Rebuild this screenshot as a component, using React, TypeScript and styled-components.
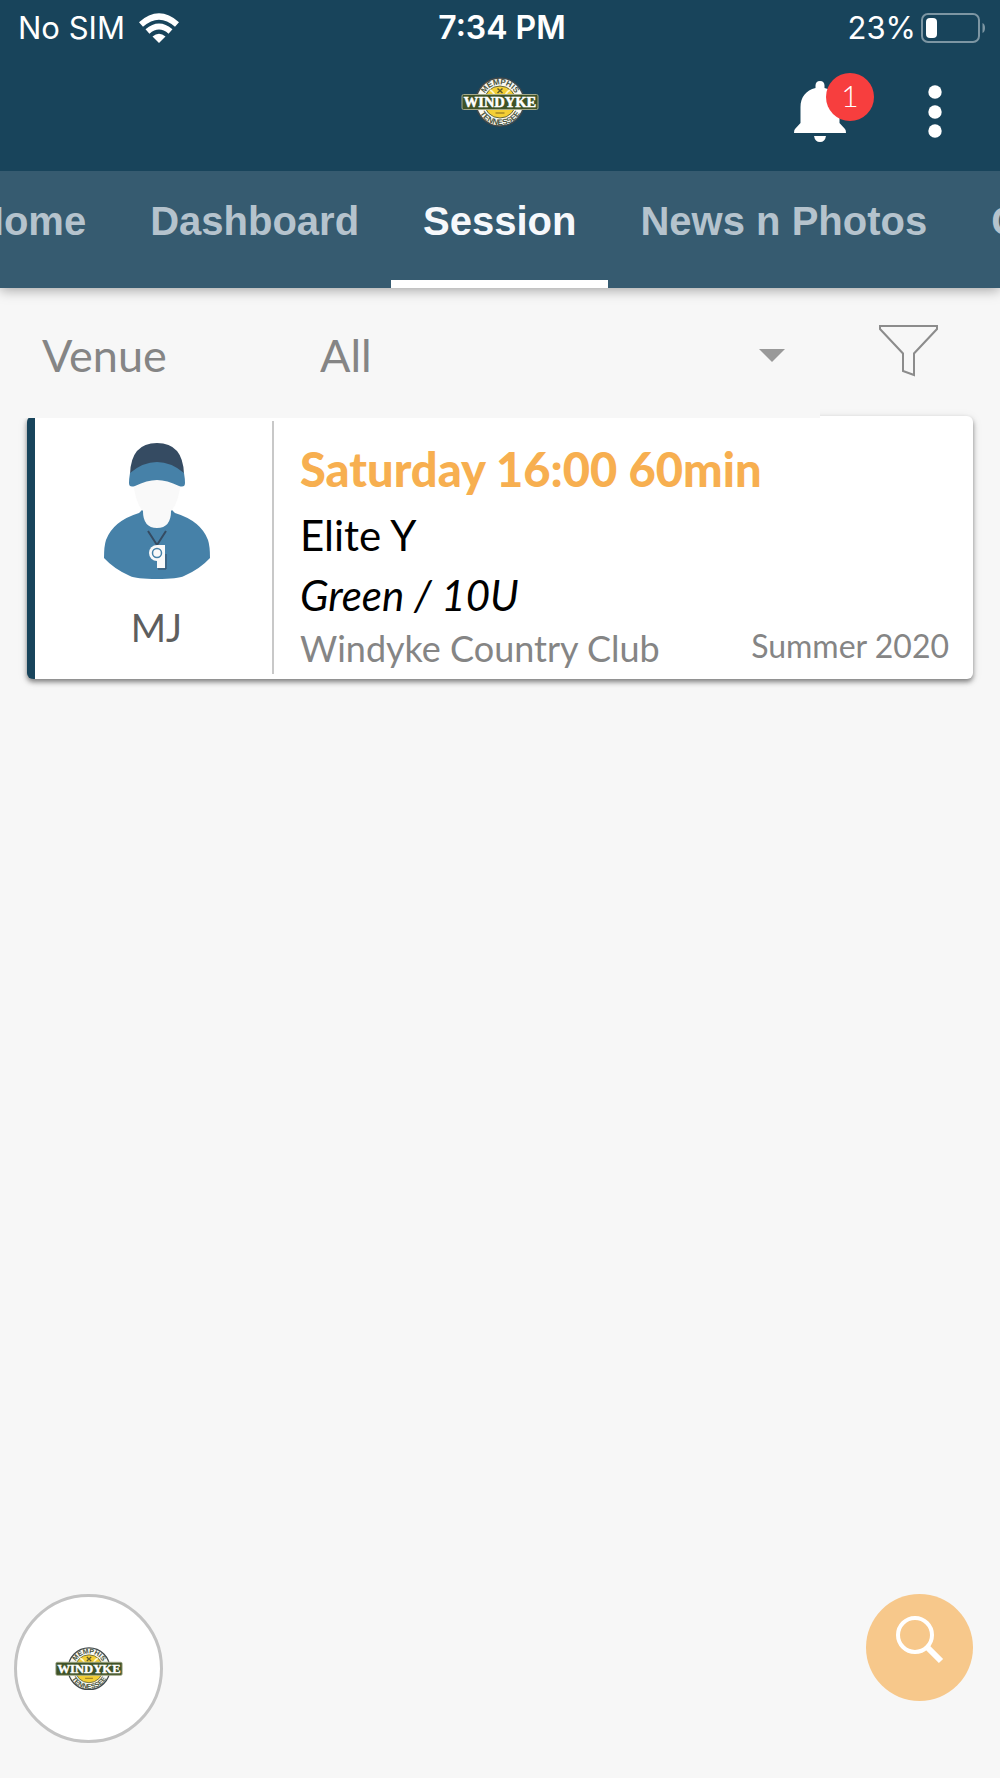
import React, { useId, useLayoutEffect, useRef, useState } from "react";
import styled, { createGlobalStyle } from "styled-components";

const navy = "#18445b";
const sans = `Lato, "Open Sans", sans-serif`;

const GlobalStyle = createGlobalStyle`
  *, *::before, *::after { box-sizing: border-box; }
  body { margin: 0; background: #f7f7f7; font-family: ${sans}; }
  button, select { font: inherit; color: inherit; background: none; border: 0; padding: 0; margin: 0; }
  svg { display: block; }
`;

const Page = styled.div`
  min-height: 100vh;
  display: flex;
  flex-direction: column;
`;

const Top = styled.header`
  position: relative;
  z-index: 3;
  background: ${navy};
  color: #fff;
`;

const StatusBar = styled.div`
  display: grid;
  grid-template-columns: 1fr auto 1fr;
  align-items: center;
  height: 56px;
  padding: 0 14px 0 18px;
  font-family: Inter, sans-serif;
  font-size: 31px;
  line-height: 36px;
`;

const StatusGroup = styled.div<{ $end?: boolean }>`
  display: flex;
  align-items: center;
  justify-content: ${(p) => (p.$end ? "flex-end" : "flex-start")};
  gap: ${(p) => (p.$end ? 5 : 14)}px;
`;

const Clock = styled.time`
  font-size: 32px;
  font-weight: 600;
`;

const AppBar = styled.div`
  display: grid;
  grid-template-columns: 1fr auto 1fr;
  align-items: center;
  height: 115px;
  padding: 0 58px 4px;
`;

const Brand = styled.div`
  grid-column: 2;
  padding-bottom: 20px;
`;

const Actions = styled.div`
  display: flex;
  justify-content: flex-end;
  align-items: center;
  gap: 82px;
`;

const IconButton = styled.button`
  position: relative;
  display: flex;
  align-items: center;
  justify-content: center;
  cursor: pointer;
`;

const Badge = styled.span`
  position: absolute;
  left: 32px;
  top: -8px;
  width: 48px;
  height: 48px;
  border-radius: 50%;
  background: #f73e3e;
  font-size: 30px;
  font-weight: 300;
  line-height: 44px;
  text-align: center;
`;

const Tabs = styled.nav`
  position: relative;
  z-index: 2;
  display: flex;
  overflow-x: auto;
  scrollbar-width: none;
  background: #365b70;
  box-shadow: 0 2px 12px rgba(0, 0, 0, 0.35);
`;

const Tab = styled.a<{ $active: boolean }>`
  flex: none;
  height: 117px;
  padding: 26px 32px 0;
  border-bottom: 8px solid ${(p) => (p.$active ? "#fff" : "transparent")};
  color: ${(p) => (p.$active ? "#f6f8fb" : "#b5c3cd")};
  font-family: "Liberation Sans", sans-serif;
  font-size: 40px;
  font-weight: 700;
  line-height: 48px;
  text-decoration: none;
`;

const FilterRow = styled.div`
  display: grid;
  grid-template-columns: 82fr 18fr;
  height: 130px;
  color: #858585;
`;

const VenueField = styled.div`
  position: relative;
  z-index: 1;
  display: grid;
  grid-template-columns: 278px 1fr 41px;
  align-items: center;
  padding: 4px 20px 0 42px;
  background: #f7f7f7;
  font-size: 45px;
  line-height: 56px;
`;

const VenueSelect = styled.select`
  grid-column: 2 / 4;
  grid-row: 1;
  appearance: none;
  width: 100%;
  height: 56px;
  cursor: pointer;
`;

const Caret = styled.span`
  grid-column: 3;
  grid-row: 1;
  justify-self: start;
  width: 0;
  border: 13px solid transparent;
  border-top-color: #999;
  border-bottom: 0;
  pointer-events: none;
`;

const FilterButton = styled(IconButton)`
  padding: 0 2px 4px 0;
`;

const List = styled.main`
  flex: 1;
  margin-top: -2px;
  padding: 0 27px;
`;

const Card = styled.article`
  display: flex;
  border-left: 8px solid ${navy};
  border-radius: 6px;
  background: #fff;
  box-shadow: 0 3px 5px rgba(0, 0, 0, 0.45), 0 2px 12px rgba(0, 0, 0, 0.08);
`;

const Coach = styled.div`
  flex: none;
  width: 239px;
  margin: 5px 0;
  padding: 21px 0 25px 6px;
  border-right: 2px solid #c8c8c8;
  display: flex;
  flex-direction: column;
  align-items: center;
  gap: 25px;
  color: #5e5e5e;
  font-size: 38px;
  line-height: 44px;
`;

const Details = styled.div`
  flex: 1;
  min-width: 0;
  padding: 21px 24px 0 26px;
  color: #000;
`;

const When = styled.h2`
  margin: 0 0 4px;
  color: #f7af50;
  font-size: 47px;
  font-weight: 900;
  line-height: 64px;
`;

const Line = styled.p<{ $italic?: boolean }>`
  margin: 0;
  font-size: 42px;
  line-height: 60px;
  font-style: ${(p) => (p.$italic ? "italic" : "normal")};
`;

const Footer = styled.div`
  display: flex;
  justify-content: space-between;
  color: #858585;
  font-size: 36px;
  line-height: 46px;
`;

const Season = styled.span`
  font-size: 32px;
  line-height: 42px;
`;

const ClubButton = styled.button`
  position: fixed;
  left: 14px;
  bottom: 35px;
  width: 149px;
  height: 149px;
  display: flex;
  align-items: center;
  justify-content: center;
  border: 3px solid #c3c3c3;
  border-radius: 50%;
  background: #fff;
  cursor: pointer;
`;

const SearchButton = styled.button`
  position: fixed;
  right: 27px;
  bottom: 77px;
  width: 107px;
  height: 107px;
  display: flex;
  align-items: center;
  justify-content: center;
  padding-bottom: 16px;
  border-radius: 50%;
  background: #f7c88b;
  cursor: pointer;
`;

function Logo({ width }: { width: number }) {
  const id = useId();
  return (
    <svg width={width} viewBox="0 0 156 100" role="img" aria-label="Windyke">
      <defs>
        <path id={id + "t"} d="M43 50 A35 35 0 0 1 113 50" />
        <path id={id + "b"} d="M32 50 A46 46 0 0 0 124 50" />
      </defs>
      <circle cx="78" cy="50" r="48" fill="#f8f8f2" stroke="#41484a" strokeWidth="3" />
      <circle cx="78" cy="50" r="32" fill="#f4cf35" stroke="#66683c" strokeWidth="2" />
      <path d="M58 26 Q67 31 69 42 M98 26 Q89 31 87 42" fill="none" stroke="#fff6c4" strokeWidth="4" />
      <path d="M73 23 L83 32 M83 23 L73 32" stroke="#5c5a2b" strokeWidth="3" />
      <path d="M69 72 H87" stroke="#a98a25" strokeWidth="3" />
      <g fontFamily="Liberation Sans, sans-serif" fontSize="16" fontWeight="700" fill="#4b5540" textAnchor="middle">
        <text>
          <textPath href={"#" + id + "t"} startOffset="50%">MEMPHIS</textPath>
        </text>
        <text>
          <textPath href={"#" + id + "b"} startOffset="50%">TENNESSEE</textPath>
        </text>
      </g>
      <rect x="2" y="35" width="152" height="30" rx="3" fill="#3f5327" stroke="#a3a88a" strokeWidth="2" />
      <text
        x="78"
        y="60"
        textAnchor="middle"
        fontFamily="Liberation Serif, serif"
        fontWeight="700"
        fontSize="29"
        fill="#fff"
        stroke="#fff"
        strokeWidth="1"
      >
        WINDYKE
      </text>
    </svg>
  );
}

function WifiIcon() {
  return (
    <svg width="40" height="30" viewBox="0 0 40 30" fill="none" stroke="#fff" strokeWidth="6">
      <path d="M2 11.500 Q20 -4.500 38 11.500" />
      <path d="M8.500 18.500 Q20 8.500 31.500 18.500" />
      <path d="M20 30 L13.500 23.500 Q20 18 26.500 23.500 Z" fill="#fff" stroke="none" />
    </svg>
  );
}

function BatteryIcon() {
  return (
    <svg width="65" height="30" viewBox="0 0 65 30">
      <rect x="1" y="1" width="57" height="28" rx="6" fill="none" stroke="#7d96a3" strokeWidth="2" />
      <rect x="5" y="5" width="11" height="20" rx="4" fill="#fff" />
      <path d="M61.500 10 Q64 11 64 15 Q64 19 61.500 20 Z" fill="#7d96a3" />
    </svg>
  );
}

function BellIcon() {
  return (
    <svg width="52" height="62" viewBox="0 0 52 62" fill="#fff">
      <path d="M26 0 C29 0 30.500 2 30.500 4.500 V7 C40 9.500 45.500 16 45.500 26 V42 L51 48 Q52 49 52 52 H0 Q0 49 1 48 L6.500 42 V26 C6.500 16 12 9.500 21.500 7 V4.500 C21.500 2 23 0 26 0 Z" />
      <path d="M20 55 H32 Q31 61 26 61 Q21 61 20 55 Z" />
    </svg>
  );
}

function MoreIcon() {
  return (
    <svg width="14" height="54" viewBox="0 0 14 54" fill="#fff">
      <circle cx="7" cy="7" r="6.700" />
      <circle cx="7" cy="27" r="6.700" />
      <circle cx="7" cy="46" r="6.700" />
    </svg>
  );
}

function FunnelIcon() {
  return (
    <svg width="60" height="52" viewBox="0 0 60 52" fill="none" stroke="#8c8c8c" strokeWidth="2">
      <path d="M1 1 H58 V4 L35 28.500 V50 L24 46 V28.500 L1 4 Z" />
    </svg>
  );
}

function SearchIcon() {
  return (
    <svg width="48" height="48" viewBox="0 0 48 48" fill="none" stroke="#fff">
      <circle cx="19" cy="19" r="17" strokeWidth="4" />
      <path d="M31 31 L45 45" strokeWidth="6" />
    </svg>
  );
}

function CoachAvatar() {
  return (
    <svg width="108" height="138" viewBox="0 0 108 138" role="img" aria-label="Coach">
      <path d="M30 38 H78 Q76 62 67 70 V90 H41 V70 Q32 62 30 38 Z" fill="#f9f9f9" />
      <path
        d="M39 68 L40 69 Q40 86 54 86 Q68 86 68 69 L69 68 L72 71 Q98 79 105 98 Q107 104 107 116 Q97 127 81 134 Q75 137 54 137 Q33 137 27 134 Q11 127 1 116 Q1 104 3 98 Q10 79 36 71 Z"
        fill="#4681a8"
      />
      <path d="M27 32 Q28 1 54 1 Q80 1 81 32 Q68 24 54 24 Q40 24 27 32 Z" fill="#354b62" />
      <path d="M27 31 Q40 20 54 20 Q68 20 81 31 Q82 37 82 41 Q82 46 76 44 Q64 38 54 38 Q44 38 32 44 Q26 46 26 41 Q26 37 27 31 Z" fill="#4681a8" />
      <path d="M45 89 L54 103 L63 89" fill="none" stroke="#354b62" strokeWidth="2" />
      <path d="M55 127 H63 V112" fill="none" stroke="#354b62" strokeWidth="1" />
      <path d="M54 103 H62 V126 H54 Z" fill="#f9f9f9" />
      <circle cx="54" cy="111" r="8" fill="#f9f9f9" />
      <circle cx="54" cy="111" r="4.500" fill="#f9f9f9" stroke="#4681a8" strokeWidth="1.500" />
    </svg>
  );
}

const tabs = ["Home", "Dashboard", "Session", "News n Photos", "Chat"];

export default function App() {
  const [active, setActive] = useState("Session");
  const bar = useRef<HTMLElement>(null);
  const current = useRef<HTMLAnchorElement>(null);

  // Keep the selected tab in the middle of the scrolling strip.
  useLayoutEffect(() => {
    const b = bar.current;
    const t = current.current;
    if (b && t) b.scrollLeft = t.offsetLeft + t.offsetWidth / 2 - b.clientWidth / 2;
  }, [active]);

  return (
    <Page>
      <GlobalStyle />
      <Top>
        <StatusBar>
          <StatusGroup>
            <span>No SIM</span>
            <WifiIcon />
          </StatusGroup>
          <Clock>7:34 PM</Clock>
          <StatusGroup $end>
            <span>23%</span>
            <BatteryIcon />
          </StatusGroup>
        </StatusBar>
        <AppBar>
          <Brand>
            <Logo width={78} />
          </Brand>
          <Actions>
            <IconButton aria-label="Notifications">
              <BellIcon />
              <Badge>1</Badge>
            </IconButton>
            <IconButton aria-label="More">
              <MoreIcon />
            </IconButton>
          </Actions>
        </AppBar>
      </Top>
      <Tabs ref={bar}>
        {tabs.map((name) => (
          <Tab
            key={name}
            href={"#" + name.toLowerCase().replace(/ /g, "-")}
            ref={name === active ? current : undefined}
            $active={name === active}
            onClick={() => setActive(name)}
          >
            {name}
          </Tab>
        ))}
      </Tabs>
      <FilterRow>
        <VenueField>
          <label htmlFor="venue">Venue</label>
          <VenueSelect id="venue" defaultValue="All">
            <option>All</option>
          </VenueSelect>
          <Caret />
        </VenueField>
        <FilterButton aria-label="Filter">
          <FunnelIcon />
        </FilterButton>
      </FilterRow>
      <List>
        <Card>
          <Coach>
            <CoachAvatar />
            <span>MJ</span>
          </Coach>
          <Details>
            <When>Saturday 16:00 60min</When>
            <Line>Elite Y</Line>
            <Line $italic>Green / 10U</Line>
            <Footer>
              <span>Windyke Country Club</span>
              <Season>Summer 2020</Season>
            </Footer>
          </Details>
        </Card>
      </List>
      <ClubButton aria-label="Club">
        <Logo width={68} />
      </ClubButton>
      <SearchButton aria-label="Search">
        <SearchIcon />
      </SearchButton>
    </Page>
  );
}
